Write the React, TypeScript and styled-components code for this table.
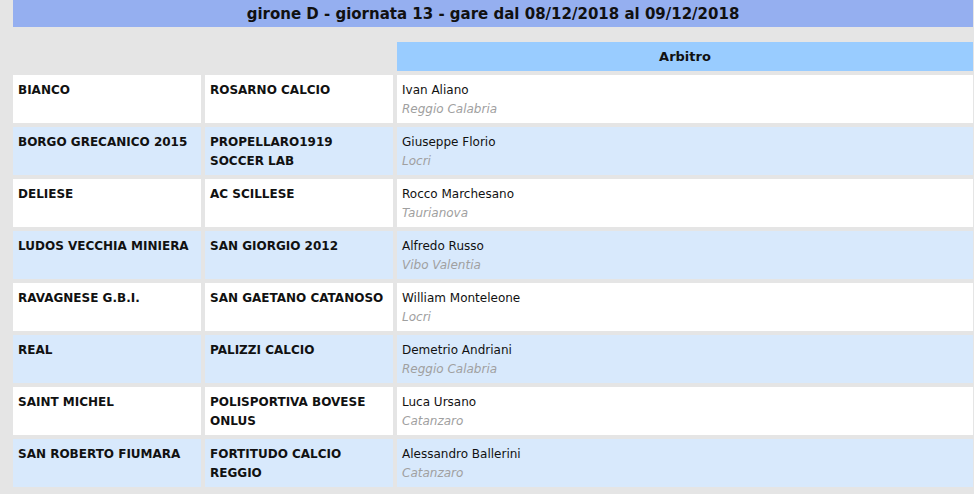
import React from 'react';
import styled, { createGlobalStyle } from 'styled-components';

const GlobalStyle = createGlobalStyle`
  html, body {
    margin: 0;
    padding: 0;
    background: #e5e5e5;
  }
  body {
    font-family: Tahoma, Verdana, "DejaVu Sans", sans-serif;
    font-size: 12px;
    color: #111;
  }
`;

const matches = [
  { home: 'BIANCO', away: 'ROSARNO CALCIO', ref: 'Ivan Aliano', city: 'Reggio Calabria' },
  { home: 'BORGO GRECANICO 2015', away: 'PROPELLARO1919 SOCCER LAB', ref: 'Giuseppe Florio', city: 'Locri' },
  { home: 'DELIESE', away: 'AC SCILLESE', ref: 'Rocco Marchesano', city: 'Taurianova' },
  { home: 'LUDOS VECCHIA MINIERA', away: 'SAN GIORGIO 2012', ref: 'Alfredo Russo', city: 'Vibo Valentia' },
  { home: 'RAVAGNESE G.B.I.', away: 'SAN GAETANO CATANOSO', ref: 'William Monteleone', city: 'Locri' },
  { home: 'REAL', away: 'PALIZZI CALCIO', ref: 'Demetrio Andriani', city: 'Reggio Calabria' },
  { home: 'SAINT MICHEL', away: 'POLISPORTIVA BOVESE ONLUS', ref: 'Luca Ursano', city: 'Catanzaro' },
  { home: 'SAN ROBERTO FIUMARA', away: 'FORTITUDO CALCIO REGGIO', ref: 'Alessandro Ballerini', city: 'Catanzaro' },
];

const Page = styled.div`
  padding: 0 1px 0 13px;
  width: 960px;
`;

const Title = styled.div`
  height: 27px;
  line-height: 28px;
  background: #95aff0;
  text-align: center;
  font-size: 15px;
  font-weight: bold;
  color: #111;
`;

const Grid = styled.div`
  display: grid;
  grid-template-columns: 188px 188px 1fr;
  column-gap: 4px;
  row-gap: 4px;
  margin-top: 15px;
`;

const Spacer = styled.div`
  grid-column: span 2;
`;

const HeadCell = styled.div`
  height: 29px;
  line-height: 30px;
  background: #99ccff;
  text-align: center;
  font-size: 13px;
  font-weight: bold;
`;

const Cell = styled.div<{ $alt: boolean }>`
  height: 48px;
  box-sizing: border-box;
  padding: 6px 5px 0;
  line-height: 19px;
  background: ${(p) => (p.$alt ? '#d8e9fc' : '#ffffff')};
`;

const Team = styled(Cell)`
  font-weight: bold;
`;

const City = styled.div`
  font-style: italic;
  color: #a0a0a0;
`;

const App = () => {
  return (
    <Page>
      <GlobalStyle />
      <Title>girone D - giornata 13 - gare dal 08/12/2018 al 09/12/2018</Title>
      <Grid>
        <Spacer />
        <HeadCell>Arbitro</HeadCell>
        {matches.map((m, i) => (
          <React.Fragment key={m.home}>
            <Team $alt={i % 2 === 1}>{m.home}</Team>
            <Team $alt={i % 2 === 1}>{m.away}</Team>
            <Cell $alt={i % 2 === 1}>
              <div>{m.ref}</div>
              <City>{m.city}</City>
            </Cell>
          </React.Fragment>
        ))}
      </Grid>
    </Page>
  );
};

export default App;
